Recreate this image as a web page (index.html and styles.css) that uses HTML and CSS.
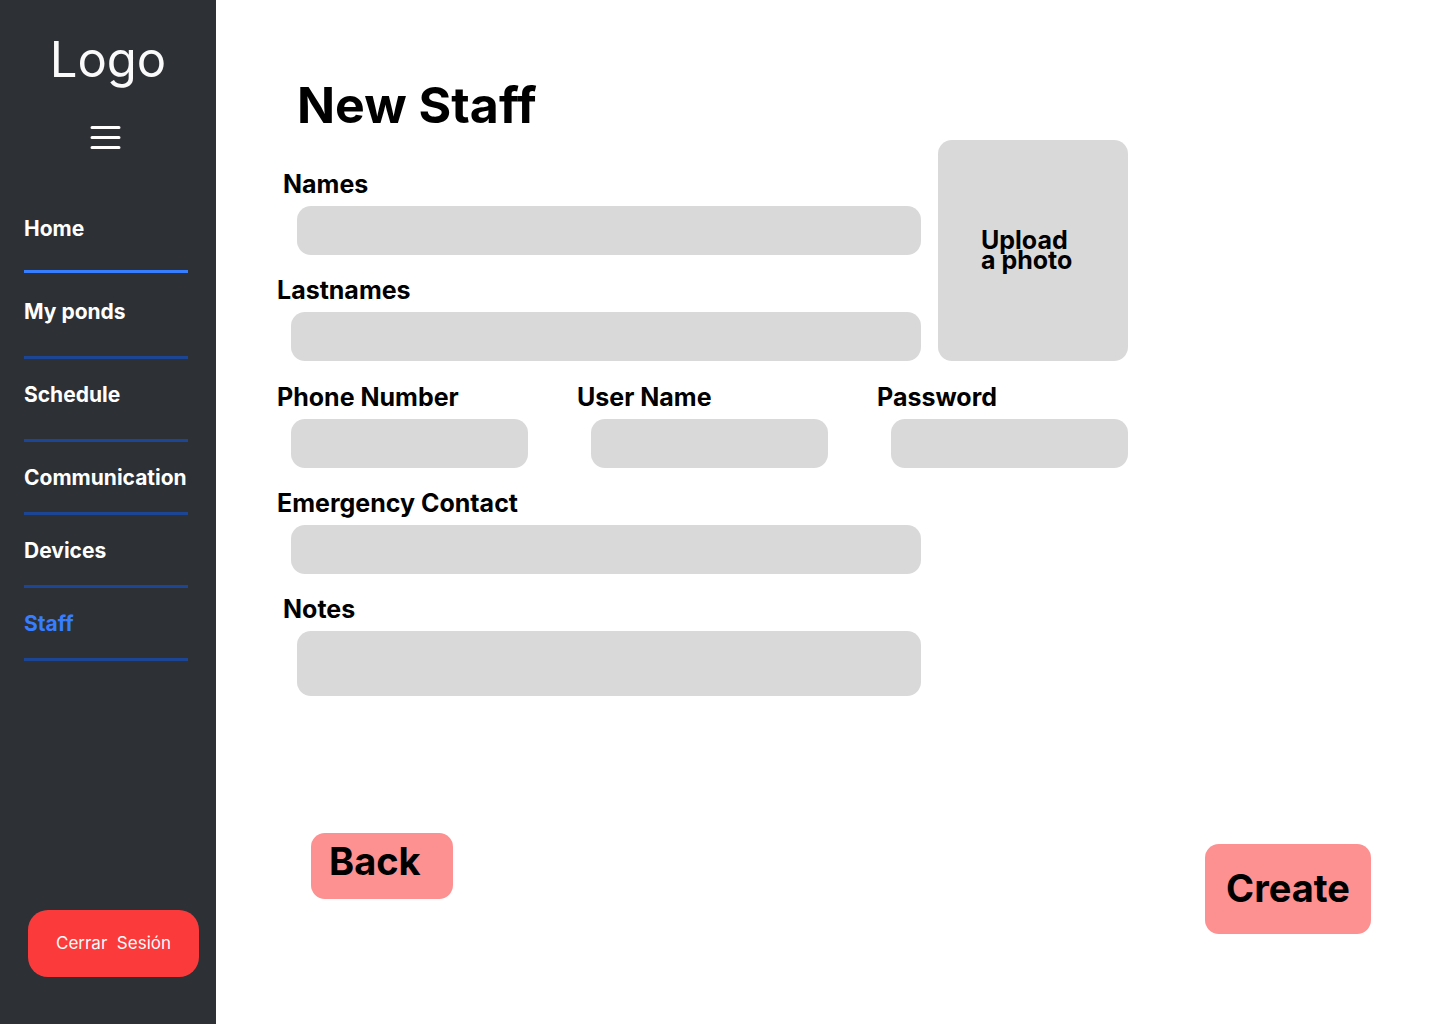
FILE: index.html
```html
<!DOCTYPE html>
<html lang="en">
<head>
<meta charset="utf-8">
<meta name="viewport" content="width=device-width, initial-scale=1">
<title>New Staff</title>
<link rel="stylesheet" href="styles.css">
</head>
<body>
<div class="layout">
  <aside class="sidebar">
    <div class="logo">Logo</div>
    <button class="menu-button" type="button" aria-label="Menu">
      <svg width="31" height="24" viewBox="0 0 31 24" fill="none" stroke="#fff" stroke-width="3" stroke-linecap="round"><path d="M2 1.5h27M2 11.5h27M2 21.5h27"/></svg>
    </button>
    <nav class="nav">
      <a class="nav-link nav-link-first" href="#">Home</a>
      <a class="nav-link nav-link-tall" href="#">My ponds</a>
      <a class="nav-link nav-link-medium" href="#">Schedule</a>
      <a class="nav-link" href="#">Communication</a>
      <a class="nav-link" href="#">Devices</a>
      <a class="nav-link nav-link-current" href="#" aria-current="page">Staff</a>
    </nav>
    <button class="logout" type="button">Cerrar&nbsp; Sesión</button>
  </aside>
  <main class="main">
    <h1 class="title">New Staff</h1>
    <form class="staff-form" id="staff-form">
      <div class="field field-first field-inset">
        <label for="names">Names</label>
        <input id="names" type="text">
      </div>
      <button class="upload" type="button">Upload<br>a photo</button>
      <div class="field">
        <label for="lastnames">Lastnames</label>
        <input id="lastnames" type="text">
      </div>
      <div class="account">
        <div class="field">
          <label for="phone">Phone Number</label>
          <input id="phone" type="tel">
        </div>
        <div class="field">
          <label for="username">User Name</label>
          <input id="username" type="text">
        </div>
        <div class="field">
          <label for="password">Password</label>
          <input id="password" type="password">
        </div>
      </div>
      <div class="field">
        <label for="emergency">Emergency Contact</label>
        <input id="emergency" type="text">
      </div>
      <div class="field field-inset">
        <label for="notes">Notes</label>
        <textarea id="notes"></textarea>
      </div>
    </form>
    <div class="actions">
      <button class="action back" type="button">Back</button>
      <button class="action create" type="submit" form="staff-form">Create</button>
    </div>
  </main>
</div>
</body>
</html>
```
FILE: styles.css
```css
* {
  box-sizing: border-box;
}

body {
  margin: 0;
  background: #fff;
  color: #000;
  font-family: Inter, "Liberation Sans", sans-serif;
}

button,
input,
textarea {
  border: 0;
  font: inherit;
  color: inherit;
}

button {
  cursor: pointer;
}

.layout {
  display: flex;
  min-height: 100vh;
}

/* Sidebar */
.sidebar {
  display: flex;
  flex-direction: column;
  flex: 0 0 216px;
  padding: 30px 17px 47px 24px;
  background: #2d3035;
  color: #fff;
}

.logo {
  padding-right: 7px;
  color: #fafafa;
  font-size: 49px;
  font-weight: 400;
  line-height: 60px;
  text-align: center;
}

.menu-button {
  display: flex;
  align-self: center;
  margin: 36px 12px 40px 0;
  padding: 0;
  background: none;
}

.nav {
  display: flex;
  flex-direction: column;
}

.nav-link {
  width: 164px;
  padding: 24px 0 22px;
  border-bottom: 3px solid #1d4596;
  color: #fff;
  font-size: 21px;
  font-weight: 700;
  line-height: 24px;
  text-decoration: none;
  white-space: nowrap;
}

.nav-link-first {
  padding: 27px 0 29px;
  border-color: #377dff;
}

.nav-link-tall {
  padding: 27px 0 32px;
}

.nav-link-medium {
  padding-bottom: 32px;
}

.nav-link-current {
  color: #377dff;
}

.logout {
  height: 67px;
  margin: auto 0 0 4px;
  padding: 0 0 2px;
  border-radius: 20px;
  background: #fb3b3b;
  color: #fafafa;
  font-size: 17px;
}

/* Content */
.main {
  flex: 1;
  min-width: 0;
  padding: 75px 69px 90px 61px;
}

.title {
  margin: 0 0 5px;
  padding-left: 20px;
  font-size: 50px;
  font-weight: 700;
  line-height: 60px;
}

.staff-form {
  display: grid;
  grid-template-columns: 1fr 190px;
  gap: 23px 17px;
  max-width: 851px;
}

.field {
  display: flex;
  flex-direction: column;
  grid-column: 1;
  gap: 10px;
  min-width: 0;
}

.field-first {
  padding-top: 32px;
}

.field-inset {
  padding-left: 6px;
}

.field label {
  font-size: 25px;
  font-weight: 700;
  line-height: 24px;
  white-space: nowrap;
}

.field input,
.field textarea {
  height: 49px;
  min-width: 0;
  margin-left: 14px;
  padding: 0 16px;
  border-radius: 14px;
  background: #d9d9d9;
  font-size: 20px;
}

.field textarea {
  height: 65px;
  padding: 16px;
  resize: none;
}

.upload {
  grid-column: 2;
  grid-row: 1 / span 2;
  padding: 0 0 2px 43px;
  border-radius: 14px;
  background: #d9d9d9;
  font-size: 25px;
  font-weight: 700;
  line-height: 20px;
  text-align: left;
}

.account {
  display: grid;
  grid-template-columns: repeat(3, 1fr);
  grid-column: 1 / -1;
  gap: 49px;
  padding-top: 1px;
}

.account .field {
  grid-column: auto;
}

.actions {
  display: flex;
  align-items: flex-start;
  justify-content: space-between;
  margin-top: 137px;
  padding-left: 34px;
}

.action {
  border-radius: 14px;
  background: #fd9090;
  font-size: 38px;
  font-weight: 700;
  line-height: 44px;
}

.back {
  width: 142px;
  padding: 6px 18px 16px;
  text-align: left;
}

.create {
  width: 166px;
  margin-top: 11px;
  padding: 22px 0 24px;
}
```
